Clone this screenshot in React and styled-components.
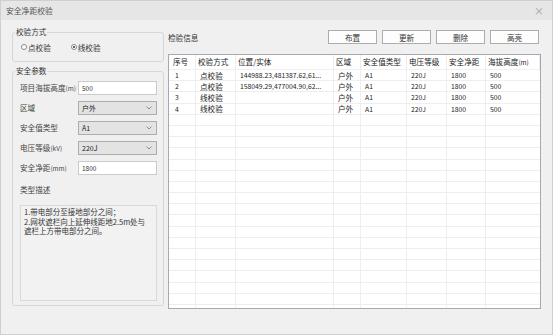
import React from "react";
import styled, { createGlobalStyle } from "styled-components";

const Global = createGlobalStyle`
  html, body { margin: 0; padding: 0; background: #ffffff; }
  body { font-family: "Noto Sans CJK SC", "Noto Sans", sans-serif; }
  * { box-sizing: border-box; }
`;

const Window = styled.div`
  width: 553px;
  height: 335px;
  border: 1px solid #cfcfcf;
  background: #f0f0f0;
  display: flex;
  flex-direction: column;
  overflow: hidden;
  color: #333;
`;

const TitleBar = styled.div`
  height: 19px;
  flex: none;
  background: #e6e6e6;
  display: flex;
  align-items: center;
  justify-content: space-between;
  padding: 0 8px 0 5px;
  font-size: 7.8px;
  color: #555;
`;

const Close = styled.span`
  font-size: 10px;
  color: #a0a0a0;
  line-height: 1;
`;

const Body = styled.div`
  flex: 1;
  display: flex;
  gap: 4px;
  padding: 0 11px;
`;

const LeftCol = styled.div`
  width: 152px;
  flex: none;
  padding-top: 7px;
  display: flex;
  flex-direction: column;
  gap: 4px;
`;

const Group = styled.fieldset`
  margin: 0;
  padding: 0 6px 4px 7px;
  border: 1px solid #d6d6d6;
  border-radius: 3px;
  min-width: 0;
`;

const Legend = styled.legend`
  padding: 0 1px;
  margin-left: -5px;
  font-size: 7.6px;
  line-height: 10px;
  color: #333;
`;

const RadioRow = styled.div`
  height: 20px;
  display: flex;
  align-items: center;
  gap: 20px;
  padding-left: 1px;
  font-size: 7.6px;
`;

const RadioItem = styled.label`
  display: flex;
  align-items: center;
  gap: 1px;
  color: #333;
`;

const RadioDot = styled.span`
  width: 6px;
  height: 6px;
  border-radius: 50%;
  border: 1px solid #8a8a8a;
  background: #fff;
  display: flex;
  align-items: center;
  justify-content: center;
  &::after {
    content: "";
    width: 2px;
    height: 2px;
    border-radius: 50%;
    background: ${(p) => (p.$checked ? "#333" : "transparent")};
  }
`;

const Form = styled.div`
  margin-top: 5px;
  display: grid;
  grid-template-columns: 58px 1fr;
  row-gap: 6px;
  align-items: center;
`;

const Label = styled.div`
  font-size: 7.6px;
  line-height: 10px;
  color: #444;
  white-space: nowrap;
`;

const Unit = styled.span`
  font-size: 6.5px;
`;

const Input = styled.div`
  height: 14px;
  background: #fff;
  border: 1px solid #cbcbcb;
  font-size: 6.5px;
  color: #333;
  display: flex;
  align-items: center;
  padding-left: 3px;
`;

const Select = styled.div`
  height: 14px;
  background: #e3e3e3;
  border: 1px solid #adadad;
  font-size: 7px;
  color: #222;
  display: flex;
  align-items: center;
  justify-content: space-between;
  padding: 0 4px 0 3px;
`;

const SectionLabel = styled(Label)`
  margin-top: 10px;
`;

const DescBox = styled.div`
  margin-top: 10px;
  height: 96px;
  border: 1px solid #d9d9d9;
  background: #f2f2f2;
  padding: 1px 3px;
  font-size: 7.5px;
  line-height: 9.5px;
  color: #333;
  white-space: nowrap;
  overflow: hidden;
`;

const RightCol = styled.div`
  flex: 1;
  padding-top: 10px;
  display: flex;
  flex-direction: column;
`;

const Toolbar = styled.div`
  height: 14px;
  display: flex;
  align-items: center;
`;

const ToolbarTitle = styled.div`
  flex: 1;
  font-size: 7.6px;
  color: #333;
`;

const Buttons = styled.div`
  display: flex;
  gap: 5px;
  margin-right: 2px;
`;

const Button = styled.button`
  width: 49px;
  height: 14px;
  margin: 0;
  padding: 0;
  border: 1px solid #adadad;
  background: #fdfdfd;
  font-family: inherit;
  font-size: 7.6px;
  color: #333;
  display: flex;
  align-items: center;
  justify-content: center;
`;

const Grid = styled.div`
  margin-top: 10px;
  height: 255px;
  border: 1px solid #a8a8b0;
  background: #fff;
  overflow: hidden;
`;

const COLS = "27px 40px 98px 27px 46px 40px 39px 1fr";

const HeadRow = styled.div`
  height: 15px;
  display: grid;
  grid-template-columns: ${COLS};
  border-bottom: 1px solid #f0f0f0;
`;

const HeadCell = styled.div`
  font-size: 7.6px;
  line-height: 14px;
  color: #222;
  padding-left: ${(p) => (p.$first ? 4 : 2)}px;
  border-right: 1px solid #ececec;
  white-space: nowrap;
  overflow: hidden;
`;

const Row = styled.div`
  height: 11.2px;
  display: grid;
  grid-template-columns: ${COLS};
  border-bottom: 1px solid #eeeeee;
`;

const Cell = styled.div`
  font-size: ${(p) => (p.$num ? "6.8px" : "7.6px")};
  color: #222;
  display: flex;
  align-items: center;
  padding-left: ${(p) => (p.$first ? 6 : 4)}px;
  border-right: 1px solid #eeeeee;
  white-space: nowrap;
  overflow: hidden;
  &:last-child { border-right: none; }
`;

const Chevron = () => (
  <svg width="6" height="4" viewBox="0 0 6 4">
    <polyline points="0.5,0.5 3,3 5.5,0.5" fill="none" stroke="#777" strokeWidth="0.8" />
  </svg>
);

const headers = ["序号", "校验方式", "位置/实体", "区域", "安全值类型", "电压等级", "安全净距", "海拔高度"];
const numCols = [true, false, true, false, true, true, true, true];

const rows = [
  ["1", "点校验", "144988.23,481387.62,61...", "户外", "A1", "220J", "1800", "500"],
  ["2", "点校验", "158049.29,477004.90,62...", "户外", "A1", "220J", "1800", "500"],
  ["3", "线校验", "", "户外", "A1", "220J", "1800", "500"],
  ["4", "线校验", "", "户外", "A1", "220J", "1800", "500"],
];

const emptyRows = Array.from({ length: 18 }, () => Array(8).fill(""));

export default function App() {
  return (
    <>
      <Global />
      <Window>
        <TitleBar>
          <span>安全净距校验</span>
          <Close>×</Close>
        </TitleBar>
        <Body>
          <LeftCol>
            <Group>
              <Legend>校验方式</Legend>
              <RadioRow>
                <RadioItem>
                  <RadioDot />
                  点校验
                </RadioItem>
                <RadioItem>
                  <RadioDot $checked />
                  线校验
                </RadioItem>
              </RadioRow>
            </Group>
            <Group>
              <Legend>安全参数</Legend>
              <Form>
                <Label>项目海拔高度<Unit>(m)</Unit></Label>
                <Input>500</Input>
                <Label>区域</Label>
                <Select>
                  <span>户外</span>
                  <Chevron />
                </Select>
                <Label>安全值类型</Label>
                <Select>
                  <span>A1</span>
                  <Chevron />
                </Select>
                <Label>电压等级<Unit>(kV)</Unit></Label>
                <Select>
                  <span>220J</span>
                  <Chevron />
                </Select>
                <Label>安全净距<Unit>(mm)</Unit></Label>
                <Input>1800</Input>
              </Form>
              <SectionLabel>类型描述</SectionLabel>
              <DescBox>
                1.带电部分至接地部分之间；
                <br />
                2.网状遮栏向上延伸线距地2.5m处与
                <br />
                遮栏上方带电部分之间。
              </DescBox>
            </Group>
          </LeftCol>
          <RightCol>
            <Toolbar>
              <ToolbarTitle>检验信息</ToolbarTitle>
              <Buttons>
                <Button>布置</Button>
                <Button>更新</Button>
                <Button>删除</Button>
                <Button>高亮</Button>
              </Buttons>
            </Toolbar>
            <Grid>
              <HeadRow>
                {headers.map((h, i) => (
                  <HeadCell key={i} $first={i === 0}>
                    {h}
                    {i === 7 && <Unit>(m)</Unit>}
                  </HeadCell>
                ))}
              </HeadRow>
              {[...rows, ...emptyRows].map((r, ri) => (
                <Row key={ri}>
                  {r.map((c, ci) => (
                    <Cell key={ci} $first={ci === 0} $num={numCols[ci]}>
                      {c}
                    </Cell>
                  ))}
                </Row>
              ))}
            </Grid>
          </RightCol>
        </Body>
      </Window>
    </>
  );
}
